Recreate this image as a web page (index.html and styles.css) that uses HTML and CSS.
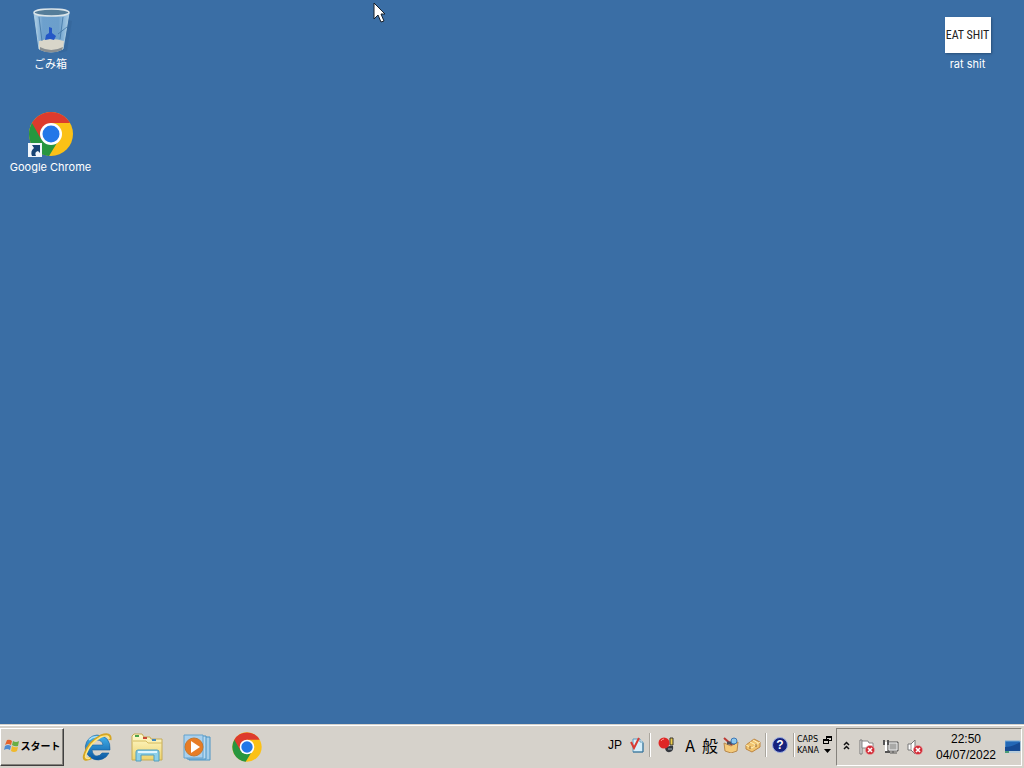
FILE: index.html
```html
<!DOCTYPE html>
<html lang="ja">
<head>
<meta charset="utf-8">
<title>Desktop</title>
<link rel="stylesheet" href="styles.css">
</head>
<body>
<svg class="defs" aria-hidden="true">
  <symbol id="chrome" viewBox="0 0 48 48">
    <circle cx="24" cy="24" r="22" fill="#fbc116"/>
    <path d="M24 24L5 13A22 22 0 0 0 22 46L33 28Z" fill="#27963f"/>
    <path d="M5 13A22 22 0 0 1 43 13H24L14 29Z" fill="#dd3b2d"/>
    <circle cx="24" cy="24" r="11" fill="#fff"/>
    <circle cx="24" cy="24" r="8.5" fill="#2377e8"/>
  </symbol>
  <symbol id="error" viewBox="0 0 10 10">
    <circle cx="5" cy="5" r="4.6" fill="#d22e38" stroke="#e9a4a8" stroke-width=".6"/>
    <path d="M3 3l4 4M7 3L3 7" stroke="#fff" stroke-width="1.6"/>
  </symbol>
  <linearGradient id="glass" x2="1"><stop stop-color="#b4d3e8"/><stop offset=".25" stop-color="#6da0cd"/><stop offset=".7" stop-color="#6c9fcb"/><stop offset="1" stop-color="#a9cde6"/></linearGradient>
  <linearGradient id="blue" y2="1" x2="0"><stop stop-color="#46b5ee"/><stop offset="1" stop-color="#0a559f"/></linearGradient>
  <linearGradient id="folder" y2="1" x2="0"><stop stop-color="#fffbd0"/><stop offset="1" stop-color="#eed36b"/></linearGradient>
</svg>

<main class="desktop">
  <div class="column">
    <button class="shortcut">
      <svg class="picture" viewBox="0 0 48 48">
        <path d="M39 12l6 2-5 30-8 2z" fill="#315f91" opacity=".4"/>
        <path d="M7 6L12 42Q24 48 36 42L42 6Z" fill="url(#glass)" stroke="#a9cbe2"/>
        <path d="M12 34Q24 30 37 34L36 42Q24 48 12 42Z" fill="#d9d6ca"/>
        <path d="M13 40Q24 46 36 40L35 43Q24 48 13 43Z" fill="#888e91"/>
        <path d="M22 20l3 1v5l4 3-2 4-4-1-5 1 1-5 3-2z" fill="#2457c6"/>
        <path d="M40 20l-9 7M12 10l3 24M36 10l-3 22" stroke="#386d9e" fill="none" opacity=".7"/>
        <ellipse cx="24.500" cy="5.500" rx="17.500" ry="3.500" fill="#557d99" stroke="#dce5e9" stroke-width="1.500"/>
      </svg>
      <span class="label">ごみ箱</span>
    </button>
    <button class="shortcut">
      <svg class="picture" viewBox="0 0 48 48">
        <use href="#chrome" width="48" height="48"/>
        <path d="M1 33h14v14H1z" fill="#f1f6fb"/>
        <path d="M5 35h8v8l-2-2q-4 1-2 5H5q-2-5 2-8z" fill="#174474"/>
      </svg>
      <span class="label">Google Chrome</span>
    </button>
  </div>
  <div class="column">
    <button class="shortcut">
      <span class="picture thumb-box"><span class="thumb">EAT SHIT</span></span>
      <span class="label">rat shit</span>
    </button>
  </div>
  <svg class="cursor" viewBox="0 0 13 21"><path d="M1 1V17L5 13L8 20L11 19L8 12H12Z" fill="#fff" stroke="#17202b"/></svg>
</main>

<footer class="taskbar">
  <button class="start">
    <svg class="small" viewBox="0 0 16 16">
      <path d="M3 2Q6 1 8 3L7 7Q4 5 1 7Z" fill="#e4632b"/>
      <path d="M9 3Q12 5 15 3L14 8Q11 9 8 7Z" fill="#68ae45"/>
      <path d="M1 8Q4 6 7 8L6 12Q3 10 0 12Z" fill="#4e8bd0"/>
      <path d="M8 8Q11 10 14 9L13 13Q10 15 7 13Z" fill="#f0b92d"/>
    </svg>
    <span>スタート</span>
  </button>
  <nav class="pinned" aria-label="Pinned programs">
    <button aria-label="Internet Explorer">
      <svg class="app" viewBox="0 0 32 32">
        <path fill-rule="evenodd" d="M16 4A12.500 12.500 0 1 0 28 22H21Q19 25 16 25 12 25 11 19H29Q30 5 16 4ZM11 14Q12 9 16 9 21 9 22 14Z" fill="url(#blue)" stroke="#145f9e" stroke-width=".6"/>
        <path d="M8 9Q12 5 18 6" stroke="#a5e0fa" stroke-width="1.500" fill="none"/>
        <path d="M29 9Q30 1 20 5 8 11 4 23 1 31 10 27" fill="none" stroke="#d5a624" stroke-width="3"/>
        <path d="M28 8Q28 3 20 6 9 12 5 23 3 29 9 27" fill="none" stroke="#ffe887" stroke-width="1.500"/>
      </svg>
    </button>
    <button aria-label="Explorer">
      <svg class="app" viewBox="0 0 32 32">
        <path d="M1 8V5l2-2h8l2 3h6l1 2h11v21H1z" fill="url(#folder)" stroke="#c6ab55"/>
        <path d="M4 4h4v2H4z" fill="#49a34a"/><path d="M12 6h4v2h-4z" fill="#ca4937"/><path d="M21 8h4v2h-4z" fill="#438abe"/>
        <path d="M2 10h13l2 2h14" stroke="#d5bc61" fill="none"/>
        <path d="M5 30V21q0-2 2-2h19q2 0 2 2v9h-5v-6H10v6z" fill="#8dd0e9" stroke="#529ebd"/>
        <path d="M7 21h19" stroke="#dff6ff" stroke-width="2"/>
      </svg>
    </button>
    <button aria-label="Media Player">
      <svg class="app" viewBox="0 0 32 32">
        <path d="M8 6h21v23H8z" fill="#a7cee8" stroke="#4b94c5"/>
        <path d="M6 5h19v23H6z" fill="#b9daf0" stroke="#4b94c5"/>
        <path d="M3 4h19v23H3z" fill="#a9d0ed" stroke="#62a2cd"/>
        <circle cx="13" cy="16" r="9" fill="#e77c25" stroke="#c6772e"/>
        <path d="M10 10l9 6-9 6z" fill="#fff"/>
      </svg>
    </button>
    <button aria-label="Google Chrome"><svg class="app"><use href="#chrome"/></svg></button>
  </nav>

  <section class="language" aria-label="Language bar">
    <button class="cell">JP</button>
    <button class="cell" aria-label="Correction">
      <svg class="small" viewBox="0 0 16 16"><path d="M4 2h7l3 3v10H4z" fill="#d6effb" stroke="#619bbb"/><path d="M11 2v3h3" fill="#fff" stroke="#619bbb"/><path d="M4 15h10V6" fill="none" stroke="#3d7396"/><path d="M2 5l3 6 5-10" fill="none" stroke="#d93a32" stroke-width="2"/></svg>
    </button>
    <i class="divider"></i>
    <button class="cell ime" aria-label="IME">
      <svg class="small" viewBox="0 0 16 16"><path d="M7 10q0 6 5 5 4-1 3-6h-3z" fill="#34383e"/><path d="M12 1h3v7h-3z" fill="#edcd4a" stroke="#39342b"/><circle cx="6" cy="6" r="5.500" fill="#df2726"/><path d="M3 4q1-2 3-2" stroke="#ff9a8e" fill="none"/><path d="M10 12h4" stroke="#9aabb9"/></svg>
    </button>
    <button class="cell mode">A</button>
    <button class="cell mode">般</button>
    <button class="cell" aria-label="IME Pad">
      <svg class="small" viewBox="0 0 16 16"><path d="M1 6l7 3 7-4-1 9-6 2-6-2z" fill="#f4ca79" stroke="#b8894e"/><path d="M1 1l8 7" stroke="#bc3932" stroke-width="2"/><path d="M4 6h8" stroke="#4a4d58" stroke-width="3"/><circle cx="11" cy="4" r="3" fill="#8ec8ec" stroke="#3e78b6"/></svg>
    </button>
    <button class="cell" aria-label="Tools">
      <svg class="small" viewBox="0 0 16 16"><path d="M1 8l8-6 6 3v5l-8 5-6-3z" fill="#f1c46e" stroke="#bd8541"/><path d="M1 8l6 3 8-6M5 5l6 3M8 3l5 3" fill="none" stroke="#fff0b9"/><path d="M5 9v3M11 7v3" stroke="#94632f"/></svg>
    </button>
    <i class="divider"></i>
    <button class="cell help" aria-label="Help"><span>?</span></button>
    <i class="divider"></i>
    <div class="locks"><button>CAPS</button><button>KANA</button></div>
    <div class="options">
      <button aria-label="Restore"><svg viewBox="0 0 9 8" shape-rendering="crispEdges"><path d="M3 0h6v5H3z"/><path d="M4 2h4v2H4z" fill="#d6d2cb"/><path d="M0 3h6v5H0z"/><path d="M1 5h4v2H1z" fill="#d6d2cb"/></svg></button>
      <button aria-label="Options"><svg viewBox="0 0 9 8"><path d="M1 2h7L4.500 6z"/></svg></button>
    </div>
  </section>

  <section class="tray" aria-label="Notification area">
    <button class="chevrons" aria-label="Show hidden icons"><svg viewBox="0 0 7 9"><path d="M1 4l2.500-2.500L6 4M1 8l2.500-2.500L6 8" fill="none" stroke="#111" stroke-width="1.500"/></svg></button>
    <button class="notice" aria-label="Action Center"><svg class="small" viewBox="0 0 16 16"><path d="M1 1h2v14H1z" fill="#fff" stroke="#777"/><path d="M3 2h6l1 2h4v7H9L8 9H3z" fill="#fff" stroke="#888"/><use href="#error" x="6" y="6" width="10" height="10"/></svg></button>
    <button class="notice" aria-label="Network"><svg class="small" viewBox="0 0 16 16"><path d="M5 3h10v9H5z" fill="#a9a9a7" stroke="#555"/><path d="M6 4h8v7H6z" fill="none" stroke="#eee"/><path d="M7 14h7M10 12v2" stroke="#555"/><path d="M1 1v4h4V1M3 5v8h4" fill="none" stroke="#555" stroke-width="2"/><path d="M2 3h2v9H2z" fill="#fff"/></svg></button>
    <button class="notice" aria-label="Volume"><svg class="small" viewBox="0 0 16 16"><path d="M1 5h3l4-4v14l-4-4H1z" fill="#fff" stroke="#777"/><path d="M4 5v6" stroke="#999"/><use href="#error" x="6" y="6" width="10" height="10"/></svg></button>
    <button class="clock"><time>22:50</time><span>04/07/2022</span></button>
    <button class="peek" aria-label="Show desktop"><svg class="small" viewBox="0 0 16 16"><path d="M0 2h15v10H0z" fill="#2368b6" stroke="#74a9d5"/><path d="M0 8q8 0 15-5v9H0z" fill="#164b94"/><path d="M0 12h15v2H0z" fill="#b9cdda"/><path d="M0 12h4v2H0z" fill="#4b9c77"/></svg></button>
  </section>
</footer>
</body>
</html>
```
FILE: styles.css
```css
* { box-sizing: border-box; }
body {
  margin: 0;
  min-height: 100vh;
  display: flex;
  flex-direction: column;
  background: #3a6ea5;
  font: 12px/16px "Liberation Sans", "Noto Sans CJK JP", sans-serif;
}
button {
  margin: 0;
  padding: 0;
  border: 0;
  background: none;
  color: #000;
  font: inherit;
}
svg { display: block; }
.defs { position: absolute; width: 0; height: 0; }

.desktop {
  flex: 1;
  display: flex;
  justify-content: space-between;
  align-items: flex-start;
  position: relative;
  padding: 7px 6px 0 0;
}
.column { display: flex; flex-direction: column; gap: 38px; }
.shortcut {
  width: 101px;
  display: flex;
  flex-direction: column;
  align-items: center;
  gap: 1px;
}
.picture { width: 48px; height: 48px; }
.thumb-box { display: flex; align-items: flex-end; justify-content: center; padding-bottom: 2px; }
.thumb {
  width: 46px;
  height: 36px;
  display: flex;
  align-items: center;
  justify-content: center;
  background: #fff;
  color: #222;
  font: 12px/34px "Liberation Sans Narrow", "Roboto Condensed", "Liberation Sans", sans-serif;
  white-space: nowrap;
  box-shadow: 1px 1px 2px #294f78;
}
.label { color: #fff; font: 11px/16px Inter, "Noto Sans CJK JP", sans-serif; }
.cursor { position: absolute; left: 373px; top: 2px; width: 13px; height: 21px; }

.taskbar {
  height: 44px;
  display: flex;
  align-items: stretch;
  padding: 3px 2px 2px 0;
  background: #d6d2cb;
  border-top: 1px solid #d6d2cb;
  box-shadow: inset 0 1px #fff;
}
.start {
  width: 64px;
  display: flex;
  align-items: center;
  justify-content: center;
  gap: 1px;
  padding-bottom: 2px;
  border: 1px solid;
  border-color: #fff #404040 #404040 #fff;
  box-shadow: inset -1px -1px #85827c;
  font-weight: bold;
  font-size: 10px;
  font-family: "Noto Sans CJK JP", sans-serif;
}
.small { width: 16px; height: 16px; flex: none; }
.pinned { display: flex; margin-left: 8px; flex: 1; }
.pinned button { width: 50px; display: flex; align-items: center; justify-content: center; }
.app { width: 32px; height: 32px; }

.language { display: flex; align-items: center; margin-right: 2px; padding-bottom: 4px; }
.cell { width: 22px; height: 24px; display: flex; align-items: center; justify-content: center; }
.ime { width: 28px; }
.mode { width: 20px; font-size: 16px; font-family: "Noto Sans CJK JP", sans-serif; }
.divider { width: 2px; height: 24px; margin: 0 1px; background: #fff; border-left: 1px solid #aaa69e; }
.help { width: 24px; }
.help span {
  width: 16px;
  height: 16px;
  border: 1px solid #9caee0;
  border-radius: 50%;
  background: #17227d;
  color: #fff;
  font-weight: bold;
  line-height: 14px;
}
.locks { width: 24px; display: flex; flex-direction: column; font: 8px/11px "DejaVu Sans", sans-serif; }
.locks button { text-align: left; padding-left: 1px; }
.options { width: 14px; display: flex; flex-direction: column; gap: 3px; align-items: center; }
.options svg { width: 9px; height: 8px; }

.tray {
  display: flex;
  align-items: stretch;
  border: 1px solid;
  border-color: #85827c #fff #fff #85827c;
}
.tray button { display: flex; align-items: center; justify-content: center; }
.tray .chevrons { width: 18px; padding-bottom: 4px; }
.chevrons svg { width: 7px; height: 9px; }
.notice { width: 24px; }
.tray .clock { width: 78px; flex-direction: column; font-size: 12px; }
.peek { width: 16px; }
```
